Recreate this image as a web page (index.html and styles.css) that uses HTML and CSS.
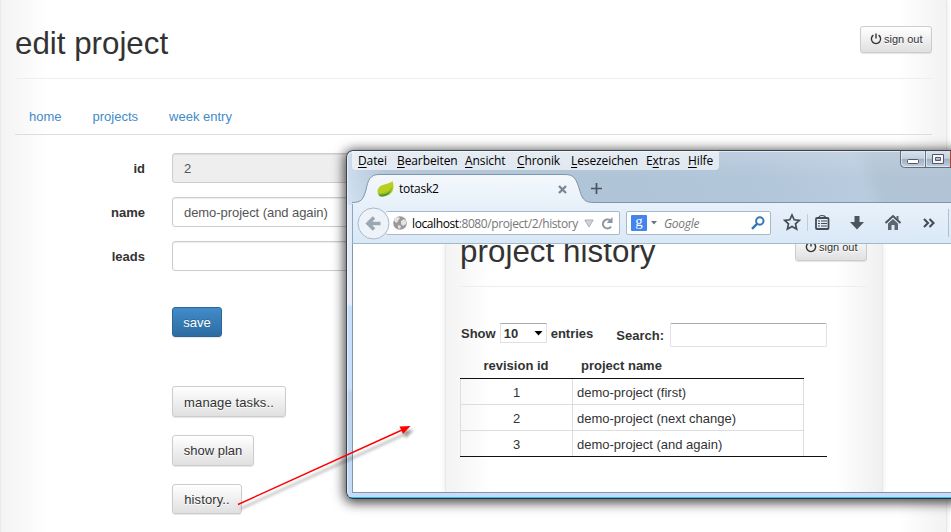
FILE: index.html
```html
<!DOCTYPE html>
<html lang="en">
<head>
<meta charset="utf-8">
<title>edit project</title>
<link rel="stylesheet" href="styles.css">
</head>
<body>
<svg width="0" height="0" class="defs"><defs>
<symbol id="power" viewBox="0 0 12 12"><path d="M3.400 2.200A4.600 4.600 0 1 0 8.600 2.200M6 .5V5.500" fill="none" stroke="#333" stroke-width="1.400"/></symbol>
</defs></svg>
<main class="page">
  <header class="page-head">
    <h1>edit project</h1>
    <button class="btn btn-sm"><svg width="12" height="12"><use href="#power"/></svg>sign out</button>
  </header>
  <nav class="nav"><a>home</a><a>projects</a><a>week entry</a></nav>
  <form class="form">
    <label>id</label><div class="field disabled">2</div>
    <label>name</label><div class="field">demo-project (and again)</div>
    <label>leads</label><div class="field"></div>
  </form>
  <div class="actions">
    <button type="button" class="btn primary">save</button>
    <button type="button" class="btn manage">manage tasks..</button>
    <button type="button" class="btn plan">show plan</button>
    <button type="button" class="btn last">history..</button>
  </div>
</main>

<section class="window">
  <div class="titlebar">
    <div class="menu">
      <span class="m1"><u>D</u>atei</span><span class="m2"><u>B</u>earbeiten</span><span class="m3"><u>A</u>nsicht</span><span class="m4"><u>C</u>hronik</span><span class="m5"><u>L</u>esezeichen</span><span class="m6">E<u>x</u>tras</span><span class="m7"><u>H</u>ilfe</span>
    </div>
    <svg class="controls" width="51" height="18" viewBox="0 0 51 18">
      <defs><linearGradient id="cg" x2="0" y2="1"><stop stop-color="#d9e3ee"/><stop offset=".45" stop-color="#c2cfdd"/><stop offset=".5" stop-color="#9eafc2"/><stop offset="1" stop-color="#c3d2e2"/></linearGradient></defs>
      <path d="M.5 0V12.5Q.5 16.5 4.500 16.500H50.500V0" fill="url(#cg)" stroke="#626d7b"/>
      <path d="M1.500 1V12Q1.500 15.500 5 15.500H24.500V1M26.500 1V15.500H49" fill="none" stroke="#edf3f8" opacity=".65"/>
      <path d="M25.500 0V16" stroke="#69737f"/><path d="M50.500 0V17" stroke="#a8483f"/>
      <rect x="7.500" y="8.500" width="11" height="4" rx="1" fill="#fff" stroke="#555766"/>
      <path d="M32.500 3.500H43.500V12.500H32.500ZM35.500 6.500V9.500H40.500V6.500Z" fill="#f6f7fa" fill-rule="evenodd" stroke="#555766"/>
    </svg>
  </div>
  <div class="tabs">
    <svg class="tab-shape" width="599" height="34" viewBox="0 0 599 34">
      <defs><linearGradient id="tg" x2="0" y2="1"><stop stop-color="#f4f8fc"/><stop offset="1" stop-color="#e8f1fa"/></linearGradient></defs>
      <path d="M0 34V32.500C10 32.500 11 29 14 20C16 10 18 4.500 27 4.500H213C222 4.500 224 9 227 18C230 28 231 32.500 242 32.500V34Z" fill="url(#tg)"/>
      <path d="M0 32.500C10 32.500 11 29 14 20C16 10 18 4.500 27 4.500H213C222 4.500 224 9 227 18C230 28 231 32.500 242 32.500H599" fill="none" stroke="#8095ac"/>
    </svg>
    <div class="tab">
      <svg width="17" height="16" viewBox="0 0 17 16"><path d="M15.500 0C12 4 4 2 1 8C-1 13 3 16 8 15C16 14 18 7 15.500 0Z" fill="#b9cf1f"/><path d="M1 12C8 13 13 10 15.500 5C15 13 9 16 3 15Z" fill="#8fbb25"/><path d="M1 13.500C6 14.500 11 13 14 9.500C11 15 7 16 3 15.300Z" fill="#4f9130"/></svg>
      <span>totask2</span>
      <svg class="close" width="9" height="9" viewBox="0 0 9 9"><path d="M1 1 8 8M8 1 1 8" stroke="#7b8692" stroke-width="2.300"/></svg>
    </div>
    <svg class="plus" width="11" height="11" viewBox="0 0 11 11"><path d="M5.500 0V11M0 5.500H11" stroke="#485462" stroke-width="1.700"/></svg>
  </div>
  <div class="toolbar">
    <svg class="back" width="33" height="33" viewBox="0 0 33 33"><circle cx="16.500" cy="16.500" r="15.500" fill="#edf3f9" stroke="#a7b8c9"/><path d="M23.500 16.500H11M17 10.500 11 16.500 17 22.500" fill="none" stroke="#9ba7b3" stroke-width="3.600"/></svg>
    <div class="url">
      <svg width="14" height="14" viewBox="0 0 14 14"><circle cx="7" cy="7" r="6.800" fill="#999"/><path d="M2 2 5 1 7 2 5.500 4 4 7 2 6 1 4ZM8 5 11 3 13 5 13 8 10 10 8 8ZM5 9 8 10 7 13 5 12Z" fill="#e3e3e3"/></svg>
      <span class="addr">localhost<i>:8080/project/2/history</i></span>
      <svg class="drop" width="10" height="9" viewBox="0 0 10 9"><path d="M.8 1H9.200L5 8Z" fill="#d0d4d8" stroke="#a9afb5"/></svg>
      <svg width="12" height="13" viewBox="0 0 12 13"><path d="M10 9.700A4.500 4.500 0 1 1 9 3.200" fill="none" stroke="#8995a1" stroke-width="2"/><path d="M11.500 0V6H5.800Z" fill="#8995a1"/></svg>
    </div>
    <div class="search">
      <span class="g">g</span>
      <svg width="6" height="4" viewBox="0 0 6 4"><path d="M0 0H6L3 3.500Z" fill="#6d747c"/></svg>
      <em>Google</em>
      <svg class="mag" width="14" height="14" viewBox="0 0 14 14"><circle cx="8.800" cy="5" r="3.700" fill="none" stroke="#3577b4" stroke-width="2"/><path d="M6 7.800 1 12.800" stroke="#3577b4" stroke-width="2.500"/></svg>
    </div>
    <svg class="tools" width="166" height="38" viewBox="0 0 166 38">
      <path d="M20 11 22.200 15.800 27.300 16.400 23.500 19.900 24.600 25 20 22.400 15.400 25 16.500 19.900 12.700 16.400 17.800 15.800Z" fill="none" stroke="#424b56" stroke-width="1.700"/>
      <path d="M35.500 10V27" stroke="#bdcddd"/>
      <rect x="44" y="14" width="12.500" height="11" rx="1" fill="none" stroke="#424b56" stroke-width="1.800"/><path d="M47 13.500Q47 11.500 50 11.500T53.500 13.500M46 17H48M49 17H55M46 19.500H48M49 19.500H55M46 22H48M49 22H55" fill="none" stroke="#424b56" stroke-width="1.100"/>
      <path d="M82.500 12H87.500V18H92L85 25.500 78 18H82.500Z" fill="#4b5560"/>
      <path d="M113.500 19 121 12 128.500 19" fill="none" stroke="#4b5560" stroke-width="2"/><path d="M116 19.500 121 15 126 19.500V26H122.500V21H119.500V26H116ZM124.500 12H126.500V16.500L124.500 14.500Z" fill="#5d6670"/>
      <path d="M152 15 156 19 152 23M157.500 15 161.500 19 157.500 23" fill="none" stroke="#424b56" stroke-width="2.100"/>
    </svg>
    <span class="divider"></span>
  </div>
  <div class="view">
    <div class="inner">
      <header class="inner-head">
        <h1>project history</h1>
        <button type="button" class="btn btn-sm"><svg width="12" height="12"><use href="#power"/></svg>sign out</button>
      </header>
      <div class="filter">
        <span>Show</span><div class="select">10<svg width="9" height="5" viewBox="0 0 9 5"><path d="M.5 0H8.500L4.500 4.500Z"/></svg></div><span>entries</span>
        <span class="search-label">Search:</span><div class="search-box"></div>
      </div>
      <div class="table-wrap">
        <table>
          <thead><tr><th class="rev">revision id</th><th>project name</th></tr></thead>
          <tbody>
            <tr><td class="rev">1</td><td>demo-project (first)</td></tr>
            <tr><td class="rev">2</td><td>demo-project (next change)</td></tr>
            <tr><td class="rev">3</td><td>demo-project (and again)</td></tr>
          </tbody>
        </table>
      </div>
    </div>
  </div>
</section>
<svg class="arrow" width="190" height="100" viewBox="0 0 190 100">
  <path d="M8 84.500 172 10" stroke="#f00" stroke-width="1.400"/>
  <path d="M180.500 6 169.500 6.500 173 14Z" fill="#f00"/>
</svg>
</body>
</html>
```

FILE: styles.css
```css
* { box-sizing: border-box; }
body {
  margin: 0;
  width: 951px;
  height: 532px;
  overflow: hidden;
  position: relative;
  background: #fff;
  color: #333;
  font: 13px/18px "Liberation Sans", Arial, sans-serif;
}
.defs { position: absolute; }
svg { display: block; flex: none; }
h1 { margin: 0; font-size: 31.3px; line-height: 36px; font-weight: 400; color: #333; }

.page {
  width: 947px;
  height: 532px;
  padding: 0 14px;
  border: solid #e9e9e9;
  border-width: 0 1px;
  background: linear-gradient(90deg, #f3f3f3, #fff 46px, #fff 898px, #f2f2f2);
  box-shadow: 0 0 5px rgba(0,0,0,.1);
}
.page-head {
  display: flex;
  justify-content: space-between;
  height: 79px;
  padding-top: 26px;
  border-bottom: 1px solid #eee;
}
.btn {
  display: block;
  padding: 1px 0 0;
  height: 31px;
  border: 1px solid #ccc;
  border-radius: 3px;
  background: linear-gradient(#fff, #e0e0e0);
  box-shadow: 0 1px 1px rgba(0,0,0,.1);
  text-shadow: 0 1px 0 #fff;
  color: #333;
  font: 13px/28px "Liberation Sans", Arial, sans-serif;
  text-align: center;
  white-space: nowrap;
}
.btn-sm {
  display: flex;
  align-items: center;
  gap: 2px;
  width: 72px;
  height: 27px;
  padding: 0 0 2px 9px;
  font-size: 11px;
  line-height: 24px;
}
.nav {
  display: flex;
  gap: 31px;
  height: 56px;
  padding: 29px 14px 0;
  border-bottom: 1px solid #ddd;
  color: #428bca;
}
.form {
  display: grid;
  grid-template-columns: 130px 1fr;
  grid-auto-rows: 30px;
  column-gap: 27px;
  row-gap: 14px;
  margin-top: 18px;
}
.form label { text-align: right; font-weight: 700; line-height: 31px; }
.field {
  border: 1px solid #ccc;
  border-radius: 3px;
  padding-left: 11px;
  line-height: 29px;
  letter-spacing: -.06px;
  color: #555;
  box-shadow: inset 0 1px 1px rgba(0,0,0,.075);
}
.field.disabled { background: #eee; }
.actions {
  display: flex;
  flex-direction: column;
  align-items: flex-start;
  gap: 18px;
  margin: 36px 0 0 157px;
}
.btn.primary {
  width: 50px;
  height: 30px;
  margin-bottom: 31px;
  border-color: #2b669a;
  background: linear-gradient(#428bca, #2d6ca2);
  color: #fff;
  text-shadow: 0 -1px 0 rgba(0,0,0,.2);
}
.btn.manage { width: 114px; padding-top: 2px; letter-spacing: .12px; }
.btn.plan { width: 82px; }
.btn.last { width: 70px; height: 30px; letter-spacing: .1px; }

.window {
  position: absolute;
  left: 346px;
  top: 150px;
  width: 620px;
  height: 349px;
  padding: 0 6px 6px 5px;
  border: 1px solid #3b434d;
  border-bottom: 1px solid #27323c;
  border-radius: 7px;
  background:
    linear-gradient(#37bfe4, #37bfe4) 0 100% / 100% 1px no-repeat,
    linear-gradient(rgba(255,255,255,.15), rgba(255,255,255,0) 50%) 0 0 / 100% 54px no-repeat,
    linear-gradient(70deg, #d3e3f2 0, #b2c5d9 8%, #b0c4d7 45%, #b2c6da 65%, #b9ccdf 82%, #b1c4d6 85%, #b1c3d5 100%) 0 0 / 100% 54px no-repeat,
    linear-gradient(#dce9f8 0, #e9eefa 44%, #c8e0fb 45%, #c8e0fb 68%, #bdd1ec 70%, #c6dcf8);
  box-shadow: 0 2px 12px 2px rgba(0,0,0,.72), inset 1px 1px 0 rgba(255,255,255,.5);
  font: 12px/18px "Open Sans", "Noto Sans", sans-serif;
  color: #000;
}
.titlebar { display: flex; justify-content: space-between; height: 19px; padding-right: 8px; }
.menu {
  display: flex;
  width: 367px;
  height: 19px;
  padding-left: 6px;
  border-radius: 0 0 4px 4px;
  background: rgba(255,255,255,.6);
  letter-spacing: -.1px;
  line-height: 19px;
  white-space: nowrap;
}
.menu u { text-underline-offset: 2px; }
.m1 { width: 39px; } .m2 { width: 68px; } .m3 { width: 52px; } .m4 { width: 54px; }
.m5 { width: 75px; } .m6 { width: 42px; }
.tabs { position: relative; display: flex; align-items: center; height: 33px; }
.tab-shape { position: absolute; left: 0; top: 0; }
.tab {
  position: relative;
  display: flex;
  align-items: center;
  gap: 5px;
  width: 215px;
  padding-left: 25px;
  margin-top: 5px;
  letter-spacing: -.25px;
}
.close { margin-left: auto; }
.plus { position: relative; margin: 4px 0 0 24px; }
.toolbar {
  display: flex;
  align-items: center;
  height: 41px;
  border-left: 1px solid #8fa6bd;
  border-bottom: 1px solid #a0b8d0;
  background: linear-gradient(#e8f1fa, #dae8f6);
}
.back { margin-left: 4px; z-index: 1; }
.url, .search {
  display: flex;
  align-items: center;
  height: 24px;
  border: 1px solid #a6b9cc;
  border-radius: 2px;
  background: #fff;
}
.url { width: 234px; margin-left: -4px; padding: 0 6px 0 7px; border-left: 0; }
.addr { margin: 2px 0 0 5px; width: 167px; overflow: hidden; white-space: nowrap; letter-spacing: -.4px; }
.addr i { font-style: normal; color: #777; }
.drop { margin: 0 7px 0 5px; }
.search { width: 145px; margin-left: 6px; padding: 0 5px 0 4px; }
.search em { margin: 2px 0 0 7px; color: #777; letter-spacing: -.3px; }
.g {
  width: 16px;
  height: 16px;
  margin-right: 4px;
  border-radius: 1px;
  background: #4384ef;
  color: #fff;
  font: 15px/12px "Liberation Serif", serif;
  text-align: center;
}
.mag { margin-left: auto; }
.tools { margin-left: 1px; }
.divider { width: 1px; height: 28px; background: #adbfd1; margin-left: 10px; }
.view {
  height: 249px;
  overflow: hidden;
  border-left: 1px solid #7f99b3;
  border-bottom: 1px solid #7f99b3;
  background: #fff;
  font: 13px/18px "Liberation Sans", Arial, sans-serif;
  color: #333;
}
.inner {
  width: 438px;
  height: 248px;
  margin-left: 92px;
  padding: 0 15px 0 14px;
  border: solid #e9e9e9;
  border-width: 0 1px;
  background: linear-gradient(90deg, #f3f3f3, #fff 46px, #fff 390px, #f0f0f0);
  box-shadow: 0 0 5px rgba(0,0,0,.1);
}
.inner-head {
  display: flex;
  justify-content: space-between;
  height: 43px;
  border-bottom: 1px solid #eee;
}
.inner-head h1 { margin-top: -10px; letter-spacing: .05px; }
.inner-head .btn { margin-top: -10px; }
.filter {
  display: flex;
  align-items: flex-start;
  height: 68px;
  padding: 36px 0 0 1px;
  font-weight: 700;
  line-height: 21px;
  white-space: nowrap;
}
.select {
  display: flex;
  align-items: center;
  justify-content: space-between;
  width: 47px;
  height: 20px;
  margin: 0 4px;
  padding: 0 3px;
  border: 1px solid #dfe0e9;
  border-top-color: #a7a8b0;
  background: #fff;
}
.search-label { margin: 2px 5px 0 23px; }
.search-box {
  width: 157px;
  height: 24px;
  margin-left: 1px;
  border: 1px solid #dfe0e9;
  border-top-color: #a7a8b0;
  border-radius: 2px;
  background: #fff;
}
.table-wrap { width: 367px; height: 102px; border-bottom: 1px solid #111; }
table { width: 344px; border-collapse: separate; border-spacing: 0; }
th {
  height: 24px;
  padding: 2px 0 0 8px;
  text-align: left;
  line-height: 18px;
  vertical-align: top;
  border-bottom: 1px solid #111;
}
td {
  height: 26px;
  padding: 2px 4px 0;
  border-right: 1px solid #ddd;
  border-bottom: 1px solid #ddd;
  line-height: 18px;
}
tbody tr:last-child td { height: 25px; border-bottom: 0; }
td.rev { border-left: 1px solid #ddd; }
.rev { width: 113px; text-align: center; padding-left: 0; padding-right: 0; }
th.rev { padding-right: 1px; }
.arrow {
  position: absolute;
  left: 230px;
  top: 420px;
  filter: drop-shadow(3px 4px 1.5px rgba(0,0,0,.4));
}
```
